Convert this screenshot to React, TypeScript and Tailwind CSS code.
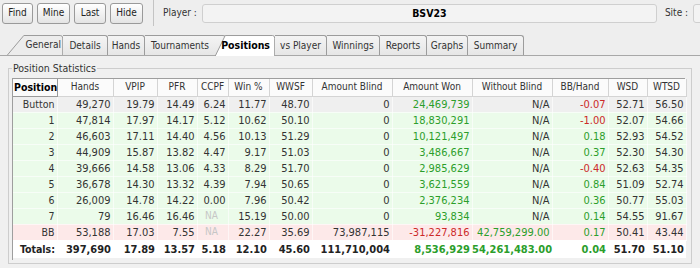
import React from "react";

type Cell = { v: string; c?: "g" | "r" | "na" };

const g = (v: string): Cell => ({ v, c: "g" });
const r = (v: string): Cell => ({ v, c: "r" });
const n = (v: string): Cell => ({ v });
const na: Cell = { v: "NA", c: "na" };

type Row = { pos: string; bg: string; cells: Cell[] };

const rows: Row[] = [
    { pos: "Button", bg: "bg-[#efefef]", cells: [n("49,270"), n("19.79"), n("14.49"), n("6.24"), n("11.77"), n("48.70"), n("0"), g("24,469,739"), n("N/A"), r("-0.07"), n("52.71"), n("56.50")] },
    { pos: "1", bg: "bg-[#ebfbea]", cells: [n("47,814"), n("17.97"), n("14.17"), n("5.12"), n("10.62"), n("50.10"), n("0"), g("18,830,291"), n("N/A"), r("-1.00"), n("52.07"), n("54.66")] },
    { pos: "2", bg: "bg-[#ebfbea]", cells: [n("46,603"), n("17.11"), n("14.40"), n("4.56"), n("10.13"), n("51.29"), n("0"), g("10,121,497"), n("N/A"), g("0.18"), n("52.93"), n("54.52")] },
    { pos: "3", bg: "bg-[#ebfbea]", cells: [n("44,909"), n("15.87"), n("13.82"), n("4.47"), n("9.17"), n("51.03"), n("0"), g("3,486,667"), n("N/A"), g("0.37"), n("52.30"), n("54.30")] },
    { pos: "4", bg: "bg-[#ebfbea]", cells: [n("39,666"), n("14.58"), n("13.06"), n("4.33"), n("8.29"), n("51.70"), n("0"), g("2,985,629"), n("N/A"), r("-0.40"), n("52.63"), n("54.35")] },
    { pos: "5", bg: "bg-[#ebfbea]", cells: [n("36,678"), n("14.30"), n("13.32"), n("4.39"), n("7.94"), n("50.65"), n("0"), g("3,621,559"), n("N/A"), g("0.84"), n("51.09"), n("52.74")] },
    { pos: "6", bg: "bg-[#ebfbea]", cells: [n("26,009"), n("14.78"), n("14.22"), n("0.00"), n("7.96"), n("50.42"), n("0"), g("2,376,234"), n("N/A"), g("0.36"), n("50.77"), n("55.03")] },
    { pos: "7", bg: "bg-[#ebfbea]", cells: [n("79"), n("16.46"), n("16.46"), na, n("15.19"), n("50.00"), n("0"), g("93,834"), n("N/A"), g("0.14"), n("54.55"), n("91.67")] },
    { pos: "BB", bg: "bg-[#fde9e9]", cells: [n("53,188"), n("17.03"), n("7.55"), na, n("22.27"), n("35.69"), n("73,987,115"), r("-31,227,816"), g("42,759,299.00"), g("0.17"), n("50.41"), n("43.44")] }
];

const totals: Cell[] = [n("397,690"), n("17.89"), n("13.57"), n("5.18"), n("12.10"), n("45.60"), n("111,710,004"), g("8,536,929"), g("54,261,483.00"), g("0.04"), n("51.70"), n("51.10")];

const headers = ["Hands", "VPIP", "PFR", "CCPF", "Win %", "WWSF", "Amount Blind", "Amount Won", "Without Blind", "BB/Hand", "WSD", "WTSD"];

function cellClass(c?: Cell["c"]) {
    if (c === "g") return "text-[#2b9e2b] text-right";
    if (c === "r") return "text-[#cc2929] text-right";
    if (c === "na") return "text-[#c6c6c6] text-center text-[10px]";
    return "text-[#333] text-right";
}

function ToolButton({ label, w }: { label: string; w: string }) {
    return (
        <div className={`${w} h-[21px] shrink-0 flex items-center justify-center rounded-[3px] border border-[#9a9a9a] bg-gradient-to-b from-white to-[#e4e4e4] text-[#222]`}>
            {label}
        </div>
    );
}

function Tab({ label, w, first, active, className = "" }: { label: string; w: string; first?: boolean; active?: boolean; className?: string }) {
    if (first || active) {
        return (
            <div className={`relative shrink-0 ${w} ${active ? "z-10 h-[21px]" : "h-[20px]"} ${className}`}>
                <svg className="absolute inset-0" width="100%" height="100%" preserveAspectRatio="none" viewBox="0 0 100 20">
                    <path
                        d={active ? "M0 20.5 L17 0.5 L96 0.5 Q99.5 0.5 99.5 3 L99.5 20.5" : "M0 20.5 L30 0.5 L95 0.5 Q99.5 0.5 99.5 3 L99.5 20.5"}
                        fill={active ? "#ffffff" : "#ececec"}
                        stroke="#9c9c9c"
                        strokeWidth="1"
                        vectorEffect="non-scaling-stroke"
                    />
                </svg>
                <span className={`relative flex h-[20px] items-center justify-end ${active ? "pr-[5px] font-bold text-black text-[10.5px]" : "pr-[2px] text-[#333]"}`}>{label}</span>
            </div>
        );
    }
    return (
        <div className={`${w} h-[20px] shrink-0 flex items-center justify-center rounded-tr-[3px] border border-b-0 border-l-0 border-[#9c9c9c] bg-gradient-to-b from-[#f4f4f4] to-[#e6e6e6] text-[#333] overflow-hidden whitespace-nowrap ${className}`}>
            {label}
        </div>
    );
}

export default function App() {
    return (
        <div className="w-[700px] h-[268px] overflow-hidden bg-[#eeeeee] font-['DejaVu_Sans_Condensed','Liberation_Sans',sans-serif] text-[10px] leading-none text-[#222]">
            {/* toolbar */}
            <div className="flex items-center h-[26px] pl-[2px] overflow-hidden">
                <div className="flex gap-[4px] shrink-0">
                    <ToolButton label="Find" w="w-[31px]" />
                    <ToolButton label="Mine" w="w-[33px]" />
                    <ToolButton label="Last" w="w-[32px]" />
                    <ToolButton label="Hide" w="w-[33px]" />
                </div>
                <div className="ml-[10px] h-[26px] w-px shrink-0 bg-[#c4c4c4]" />
                <span className="ml-[9px] shrink-0 text-[#333]">Player :</span>
                <div className="ml-[5px] w-[455px] h-[19px] shrink-0 flex items-center justify-center rounded-[3px] border border-[#cfcfcf] bg-[#f3f3f3] font-bold text-black text-[10.5px]">
                    BSV23
                </div>
                <span className="ml-[8px] shrink-0 text-[#333]">Site :</span>
                <div className="ml-[5px] w-[40px] h-[19px] shrink-0 rounded-[3px] border border-[#cfcfcf] bg-[#f3f3f3]" />
            </div>

            {/* tabs */}
            <div className="flex items-end h-[30px] pl-[7px] border-b border-[#a8a8a8]">
                <Tab label="General" w="w-[56px]" first />
                <Tab label="Details" w="w-[45px]" />
                <Tab label="Hands" w="w-[37px]" />
                <Tab label="Tournaments" w="w-[81px]" className="justify-start pl-[6px]" />
                <Tab label="Positions" w="w-[60px]" active className="-ml-[11px] -mb-px" />
                <Tab label="vs Player" w="w-[52px]" />
                <Tab label="Winnings" w="w-[53px]" />
                <Tab label="Reports" w="w-[47px]" />
                <Tab label="Graphs" w="w-[41px]" />
                <Tab label="Summary" w="w-[56px]" />
            </div>

            {/* panel */}
            <div className="px-[8px] pt-[12px] bg-[#f0f0f0] h-[212px]">
                <div className="relative h-[196px] border border-[#cdcdcd] pl-[3px] pt-[9px] pr-[6px]">
                    <span className="absolute -top-[6px] left-[3px] bg-[#f0f0f0] px-[1px] text-[#333] text-[10.5px]">Position Statistics</span>
                    <div className="h-[182px] border-l border-t border-[#9e9e9e] bg-[#f0f0f0]">
                        <table className="table-fixed border-collapse w-[673px] text-[11px]">
                            <colgroup>
                                <col className="w-[44px]" />
                                <col className="w-[56px]" />
                                <col className="w-[44px]" />
                                <col className="w-[40px]" />
                                <col className="w-[31px]" />
                                <col className="w-[41px]" />
                                <col className="w-[43px]" />
                                <col className="w-[80px]" />
                                <col className="w-[80px]" />
                                <col className="w-[80px]" />
                                <col className="w-[56px]" />
                                <col className="w-[39px]" />
                                <col className="w-[39px]" />
                            </colgroup>
                            <thead>
                                <tr className="h-[17px] bg-[#fbfbfb] text-[10px]">
                                    <th className="border-r border-b border-[#9a9a9a] text-left pl-[1px] font-bold text-black text-[10.5px]">Position</th>
                                    {headers.map((h) => (
                                        <th key={h} className="border-r border-b border-[#d4d4d4] font-normal text-[#333] whitespace-nowrap">
                                            {h}
                                        </th>
                                    ))}
                                </tr>
                            </thead>
                            <tbody>
                                {rows.map((row) => (
                                    <tr key={row.pos} className={`h-[16px] ${row.bg}`}>
                                        <td className="text-right pr-[2px] text-[#333] border-r border-b border-white/60 text-[10.5px]">{row.pos}</td>
                                        {row.cells.map((c, i) => (
                                            <td key={i} className={`pr-[2px] whitespace-nowrap border-r border-b border-white/60 ${cellClass(c.c)}`}>
                                                {c.v}
                                            </td>
                                        ))}
                                    </tr>
                                ))}
                                <tr className="h-[18px] bg-white font-bold">
                                    <td className="text-right pr-[2px] text-[#222] text-[10.5px]">Totals:</td>
                                    {totals.map((c, i) => (
                                        <td key={i} className={`pr-[2px] whitespace-nowrap ${c.c === "g" ? "text-[#2b9e2b] text-right" : "text-[#222] text-right"}`}>
                                            {c.v}
                                        </td>
                                    ))}
                                </tr>
                            </tbody>
                        </table>
                    </div>
                </div>
            </div>
        </div>
    );
}
